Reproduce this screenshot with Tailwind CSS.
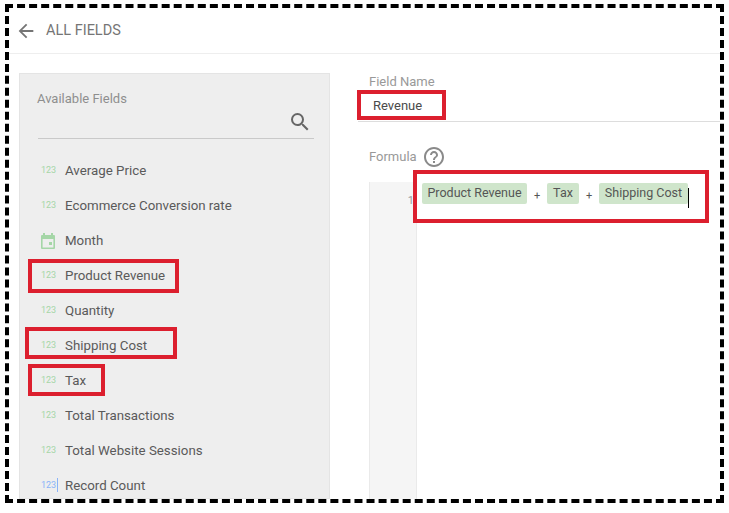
<!DOCTYPE html>
<html>
<head>
<meta charset="utf-8">
<script src="https://cdn.jsdelivr.net/npm/@tailwindcss/browser@4"></script>
</head>
<body class="bg-white">
<div class="relative w-[729px] h-[513px] overflow-hidden bg-white pt-1 pl-[5px] font-['Roboto',sans-serif]">
  <div class="w-[719px] h-[499px] border-4 border-dashed border-black overflow-hidden flex flex-col">
    <header class="h-[44px] shrink-0 border-b border-[#eeeeee] flex items-center pl-[6px] pt-px box-content">
      <svg class="w-[22px] h-[22px] text-[#757575]" viewBox="0 0 24 24" fill="currentColor"><path d="M20 11H7.83l5.59-5.59L12 4l-8 8 8 8 1.41-1.41L7.83 13H20v-2z"/></svg>
      <span class="ml-[9px] text-[14.5px] text-[#757575]">ALL FIELDS</span>
    </header>
    <div class="flex flex-1 min-h-0">
      <aside class="ml-[10px] mt-[19px] w-[311px] shrink-0 bg-[#eeeeee] border border-[#e4e4e4] pl-[17px] pr-[15px] pt-[17px]">
        <div class="text-[13px] leading-4 text-[#8e8e8e]">Available Fields</div>
        <div class="h-[32px] border-b border-[#c9c9c9] ml-px flex justify-end items-start pr-[2px] pt-[3px]">
          <svg class="w-[24px] h-[24px] text-[#666666]" viewBox="0 0 24 24" fill="currentColor"><path d="M15.5 14h-.79l-.28-.27A6.47 6.47 0 0 0 16 9.5 6.5 6.5 0 1 0 9.5 16c1.61 0 3.09-.59 4.23-1.57l.27.28v.79l5 4.99L20.49 19l-4.99-5zm-6 0C7.01 14 5 11.99 5 9.5S7.01 5 9.5 5 14 7.01 14 9.5 11.99 14 9.5 14z"/></svg>
        </div>
        <ul class="mt-[14px] text-[13.3px] text-[#5a5a5a] -ml-[1px]">
          <li class="h-[35px] flex items-center"><span class="w-[29px] pl-[5px] pt-px text-[9px] text-[#a5d6a7]">123</span>Average Price</li>
          <li class="h-[35px] flex items-center"><span class="w-[29px] pl-[5px] pt-px text-[9px] text-[#a5d6a7]">123</span>Ecommerce Conversion rate</li>
          <li class="h-[35px] flex items-center"><span class="w-[29px] pl-[4px]"><svg class="w-[16px] h-[18px] text-[#a5d6a7]" viewBox="0 0 16 18" fill="currentColor"><path d="M3 1h2v2h6V1h2v2h1a1 1 0 0 1 1 1v12a1 1 0 0 1-1 1H2a1 1 0 0 1-1-1V4a1 1 0 0 1 1-1h1V1zM2.6 7v8.4h10.8V7H2.6zM9 10h3v3H9v-3z"/></svg></span>Month</li>
          <li class="h-[35px] flex items-center"><span class="w-[29px] pl-[5px] pt-px text-[9px] text-[#a5d6a7]">123</span>Product Revenue</li>
          <li class="h-[35px] flex items-center"><span class="w-[29px] pl-[5px] pt-px text-[9px] text-[#a5d6a7]">123</span>Quantity</li>
          <li class="h-[35px] flex items-center"><span class="w-[29px] pl-[5px] pt-px text-[9px] text-[#a5d6a7]">123</span>Shipping Cost</li>
          <li class="h-[35px] flex items-center"><span class="w-[29px] pl-[5px] pt-px text-[9px] text-[#a5d6a7]">123</span>Tax</li>
          <li class="h-[35px] flex items-center"><span class="w-[29px] pl-[5px] pt-px text-[9px] text-[#a5d6a7]">123</span>Total Transactions</li>
          <li class="h-[35px] flex items-center"><span class="w-[29px] pl-[5px] pt-px text-[9px] text-[#a5d6a7]">123</span>Total Website Sessions</li>
          <li class="h-[35px] flex items-center"><span class="w-[29px] pl-[5px] pt-px text-[9px] text-[#8ab4f8]"><span class="border-r border-[#8ab4f8] pr-px py-[2px]">123</span></span>Record Count</li>
        </ul>
      </aside>
      <section class="ml-[28px] flex-1 min-w-0 pt-[20px] relative">
        <div class="pl-[11px] text-[13px] leading-4 text-[#999999]">Field Name</div>
        <div class="h-[33px] -mt-[1px] border-b border-[#dddddd] pl-[15px] -mr-px flex items-center text-[13px] text-[#4a4a4a] pt-[2px]">Revenue</div>
        <div class="mt-[24px] pl-[11px] flex items-center gap-[5px] text-[13px] text-[#999999] h-[22px]">Formula
          <svg class="w-[24px] h-[24px] shrink-0 text-[#8a8a8a]" viewBox="0 0 24 24" fill="currentColor"><path d="M11 18h2v-2h-2v2zm1-16C6.48 2 2 6.48 2 12s4.48 10 10 10 10-4.48 10-10S17.52 2 12 2zm0 18c-4.41 0-8-3.59-8-8s3.59-8 8-8 8 3.59 8 8-3.59 8-8 8zm0-14c-2.21 0-4 1.79-4 4h2c0-1.1.9-2 2-2s2 .9 2 2c0 2-3 1.75-3 5h2c0-2.25 3-2.5 3-5 0-2.21-1.79-4-4-4z"/></svg>
        </div>
        <div class="mt-[14px] flex h-[400px]">
          <div class="ml-[11px] w-[48px] shrink-0 bg-[#f5f5f5] border-x border-[#eaeaea] text-right pr-[2px] pt-[11px] text-[11px] leading-4 text-[#9a9a9a]">1</div>
          <div class="flex items-start pl-[5px] pt-px text-[12.5px] text-[#555555]">
            <span class="h-[21px] w-[105px] flex items-center justify-center rounded-[2px] bg-[#cfe5cb]">Product Revenue</span>
            <span class="w-[20px] text-center text-[11px] leading-[26px]">+</span>
            <span class="h-[21px] w-[32px] flex items-center justify-center rounded-[2px] bg-[#cfe5cb]">Tax</span>
            <span class="w-[20px] text-center text-[11px] leading-[26px]">+</span>
            <span class="h-[21px] w-[89px] flex items-center justify-center rounded-[2px] bg-[#cfe5cb]">Shipping Cost</span>
            <span class="w-px h-[20px] mt-[5px] bg-black"></span>
          </div>
        </div>
      </section>
    </div>
  </div>
  <div class="absolute left-[28px] top-[259px] w-[151px] h-[34px] border-4 border-[#dc1f2e]"></div>
  <div class="absolute left-[25px] top-[327px] w-[152px] h-[32px] border-4 border-[#dc1f2e]"></div>
  <div class="absolute left-[28px] top-[364px] w-[77px] h-[32px] border-4 border-[#dc1f2e]"></div>
  <div class="absolute left-[357px] top-[90px] w-[89px] h-[30px] border-4 border-[#dc1f2e]"></div>
  <div class="absolute left-[413px] top-[170px] w-[296px] h-[53px] border-4 border-[#dc1f2e]"></div>
</div>
</body>
</html>
